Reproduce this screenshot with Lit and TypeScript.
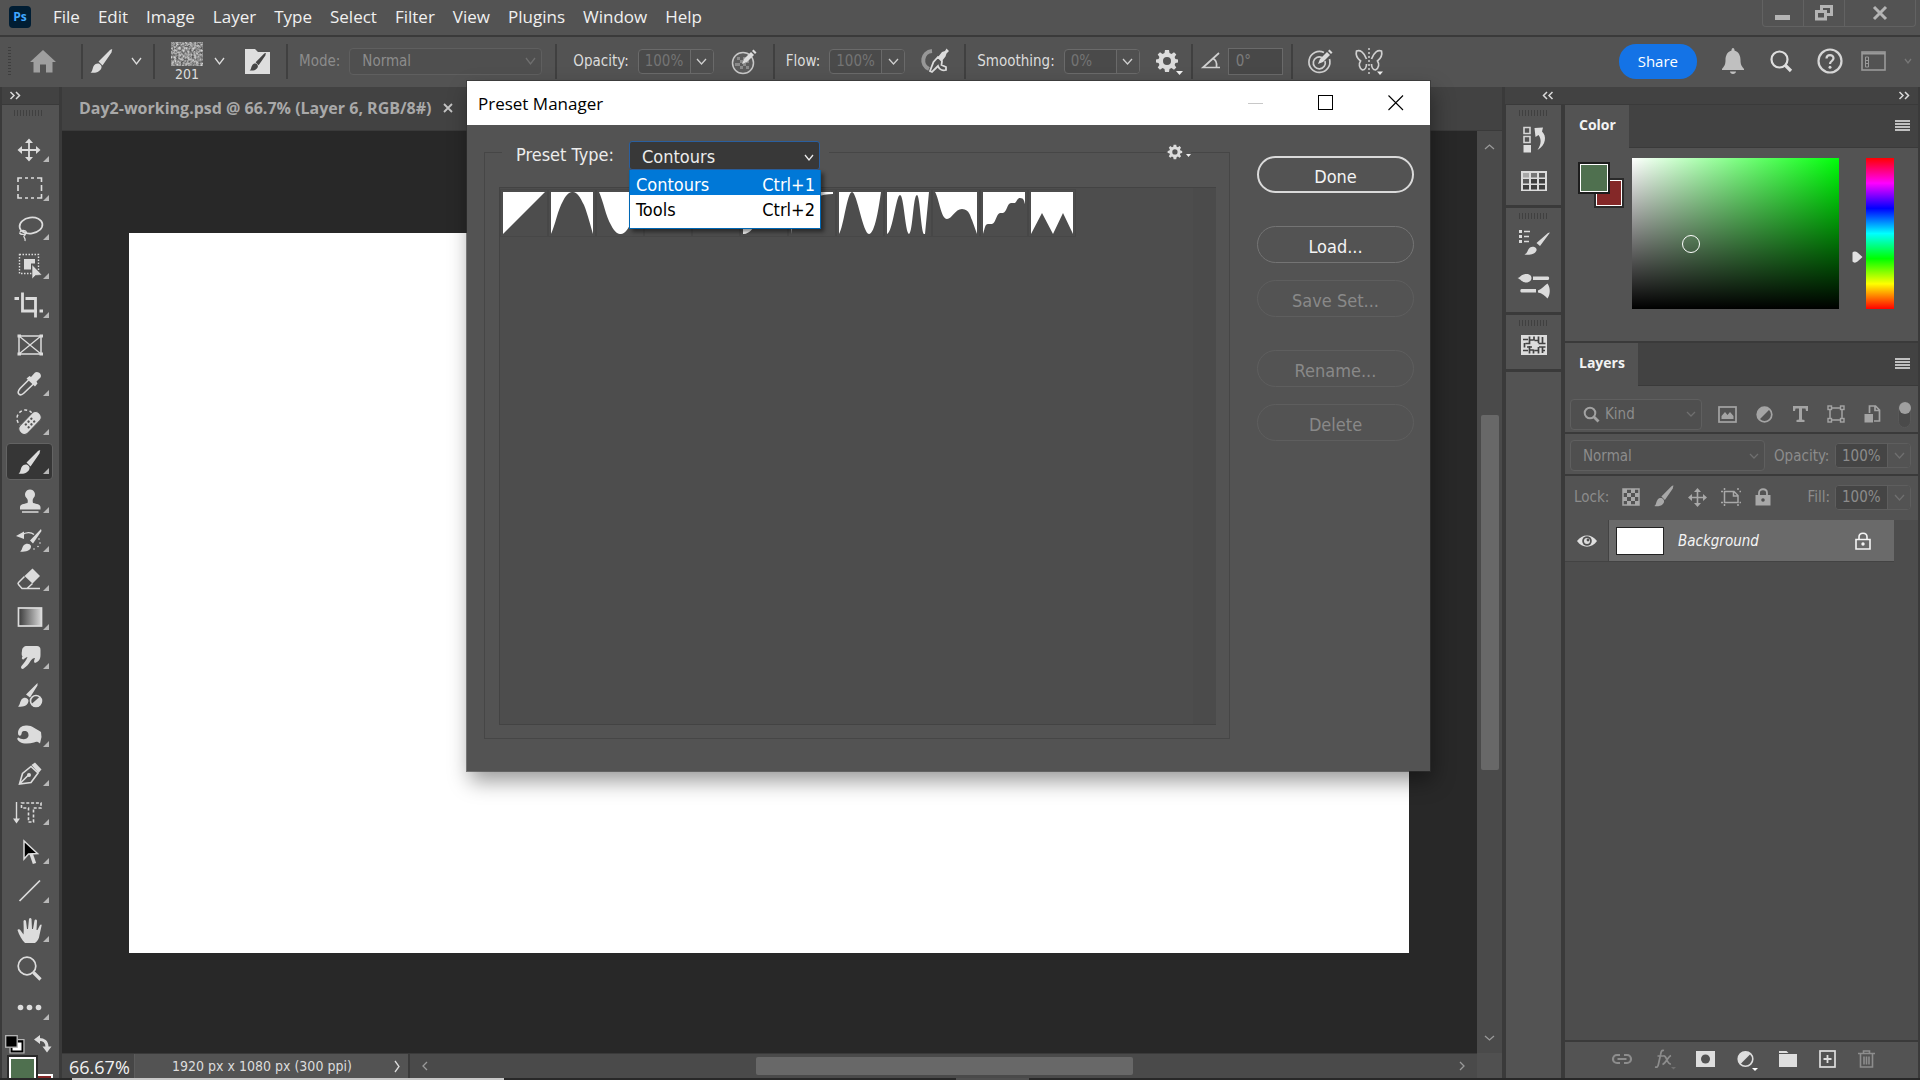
import { LitElement, html, css, svg, nothing } from "lit";
import { customElement, state } from "lit/decorators.js";
import { classMap } from "lit/directives/class-map.js";

const icon = (w: number, h: number, body: unknown) =>
  html`<svg class="icon" width=${w} height=${h} viewBox="0 0 ${w} ${h}" aria-hidden="true">${body}</svg>`;

const chevron = (dir: "down" | "up" | "left" | "right", w = 12, h = 8) => {
  const paths = {
    down: `M1 1L${w / 2} ${h - 1}L${w - 1} 1`,
    up: `M1 ${h - 1}L${w / 2} 1L${w - 1} ${h - 1}`,
    left: `M${w - 1} 1L1 ${h / 2}L${w - 1} ${h - 1}`,
    right: `M1 1L${w - 1} ${h / 2}L1 ${h - 1}`,
  };
  return icon(w, h, svg`<path d=${paths[dir]} fill="none" stroke="currentColor" stroke-width="1.3"/>`);
};

const doubleChevron = (left: boolean) =>
  icon(12, 9, svg`<path d=${left ? "M5 1L1.5 4.5L5 8M10.500 1L7 4.500L10.500 8" : "M1.5 1L5 4.500L1.500 8M7 1L10.500 4.500L7 8"} fill="none" stroke="#dadada" stroke-width="1.5"/>`);

const brushShape = svg`
  <path d="M27 6C28 5 26 5 25 6L13.500 17.500L17.500 21.500L26.500 8.500Z" fill="currentColor"/>
  <path d="M5.500 28.500C8 27 7 24.500 9 21.500C10.500 19 14.500 18.500 16.200 21.500C17.500 24.500 15 27 12 28.200C9.500 29 7 28.800 5.500 28.500Z" fill="currentColor"/>`;

const gearShape = svg`
  <path fill="currentColor" fill-rule="evenodd" d="M10 1H14L14.500 4L16.500 4.900L19 3.200L21.300 5.500L19.600 8L20.400 10L23 10.500V13.500L20.400 14L19.600 16L21.300 18.500L19 20.800L16.500 19.100L14.500 20L14 23H10L9.500 20L7.500 19.100L5 20.800L2.700 18.500L4.400 16L3.600 14L1 13.500V10.500L3.600 10L4.400 8L2.700 5.500L5 3.200L7.500 4.900L9.500 4ZM12 8A4 4 0 1 0 12 16A4 4 0 1 0 12 8Z"/>`;

const pencil = (x: number, y: number) => svg`
  <g transform="translate(${x} ${y})">
    <path d="M0 14L2 9L9 2L12 5L5 12Z" fill="#dcdcdc"/>
    <path d="M10 1L11.500 -0.500L14.500 2.500L13 4Z" fill="#dcdcdc"/>
  </g>`;

interface Tool { name: string; more: boolean; art: unknown; }

const stroke = (d: string, w = 1.6) => svg`<path d=${d} fill="none" stroke="currentColor" stroke-width=${w}/>`;
const fill = (d: string) => svg`<path d=${d} fill="currentColor"/>`;

const TOOLS: Tool[] = [
  { name: "Move", more: true, art: svg`${stroke("M16 8V26M7 17H25", 1.8)}${fill("M16 5.500L20 10H12ZM16 28.500L20 24H12ZM4.500 17L9 13V21ZM27.500 17L23 13V21Z")}` },
  { name: "Rectangular Marquee", more: true, art: stroke("M5 10V6H9M12 6H15M18 6H21M24 6H28.500V10M28.500 13V19M28.500 22V26H24M21 26H18M15 26H12M9 26H5V22M5 19V13") },
  { name: "Lasso", more: true, art: svg`<ellipse cx="18" cy="14.500" rx="11.500" ry="8" transform="rotate(-8 18 14.500)" fill="none" stroke="currentColor" stroke-width="1.7"/>${stroke("M7 21C8 18.500 13 19 13.500 21.500C13 24 7 24 6.500 21.500M9 20C14 22 12.500 24 11 25C10 26 13 27 12 30", 1.3)}` },
  { name: "Object Selection", more: true, art: svg`<rect x="6.500" y="4.500" width="19" height="19" fill="none" stroke="currentColor" stroke-width="1.4" stroke-dasharray="1.500 1.500"/>${fill("M11 9H22V13.500H18V19.500H11Z")}<path d="M19 14.500V29L22.500 25.500L29 25Z" fill="currentColor" stroke="#535353" stroke-width="0.600"/>` },
  { name: "Crop", more: true, art: svg`${stroke("M1.500 9.500H6M9.500 3.500V22H24M26.500 22H30M12.500 9.500H22.500V28.500", 2.8)}` },
  { name: "Frame", more: false, art: svg`<rect x="6" y="8" width="22" height="18" fill="none" stroke="currentColor" stroke-width="1.5"/>${stroke("M6 8L28 26M28 8L6 26", 1.3)}${fill("M4.500 6.500H8V9.500H4.500ZM26.500 6.500H30V9.500H26.500ZM4.500 24.500H8V27.500H4.500ZM26.500 24.500H30V27.500H26.500Z")}` },
  { name: "Eyedropper", more: true, art: svg`${stroke("M17 11.500L7 21.500C5.500 23.500 4.500 26 6 27.200C7.500 28.500 9.500 27.500 11 26L21.500 16", 1.6)}${fill("M13.500 11.500L16.500 9L18 10L22 5.500C25 3.500 29.500 7.500 27.500 10.500L23.500 14.500L24.500 16.500L22 19.500Z")}` },
  { name: "Spot Healing Brush", more: true, art: svg`<circle cx="12.500" cy="12.500" r="8.500" fill="none" stroke="currentColor" stroke-width="1.500" stroke-dasharray="3 2.500"/><g transform="rotate(-46 17 17)"><rect x="3.500" y="11.500" width="27" height="11" rx="5" fill="currentColor" stroke="#535353"/><g fill="#535353"><circle cx="13" cy="15" r="1.200"/><circle cx="17" cy="15" r="1.200"/><circle cx="21" cy="15" r="1.200"/><circle cx="13" cy="19" r="1.200"/><circle cx="17" cy="19" r="1.200"/><circle cx="21" cy="19" r="1.200"/></g></g>` },
  { name: "Brush", more: true, art: brushShape },
  { name: "Clone Stamp", more: true, art: fill("M17 5.500A5 5 0 0 1 20.500 14C19.500 15.500 19.500 17 20 19C24 20 27 20 27.500 23V25.500H7V23C7.500 20 10.500 20 14.500 19C15 17 15 15.500 13.500 14A5 5 0 0 1 17 5.500ZM9 27.200H25.500V28.800H9Z") },
  { name: "History Brush", more: true, art: svg`${fill("M28 6L17 17.500L20 20.500L28.500 8ZM7 28.500C9.500 27 8.500 25.500 10.500 22.500C12.500 20 17 20 18 23C18.500 26.500 14 29.500 7 28.500ZM3 13L11 8.500V16Z")}${stroke("M9 12C13 9 18 9 21 11.500", 1.3)}<g fill="currentColor"><circle cx="26" cy="16" r=".8"/><circle cx="27" cy="20" r=".8"/><circle cx="25" cy="23.500" r=".8"/><circle cx="21" cy="26" r=".8"/></g>` },
  { name: "Eraser", more: true, art: svg`${fill("M11.500 14L19.500 6.500L27 14L19.500 21.500Z")}${stroke("M11.500 14.500L5.500 20.500C5 21 5 22 5.500 22.500L9 26.500H14L19.500 21.500M9 26.500H27", 1.5)}` },
  { name: "Gradient", more: true, art: svg`<defs><linearGradient id="g"><stop offset="0" stop-color="#3a3a3a"/><stop offset="1" stop-color="#d8d8d8"/></linearGradient></defs><rect x="5.500" y="7" width="23" height="18" fill="url(#g)" stroke="currentColor" stroke-width="1.700"/>` },
  { name: "Smudge", more: true, art: fill("M9 11C9 8 11 6 14 6H24C26 6 27.500 7 27.500 10V15C27.500 20 25 22 22 23C20.500 22.500 21 20.500 22 18C20 18 19 19 17.500 21C16 24 13 27 10 29C8 29 7.500 27.500 8.500 26C11 23 13.500 20 14.500 17C13.500 17 12 18 10.500 19.500C8.500 19.500 8.500 18 9.500 16.500C8.500 15.500 8.500 13 9 11Z") },
  { name: "Adjustment Brush", more: false, art: svg`${fill("M24.500 4L13 15.500L17 18.500L24.500 6.500ZM5 27.500C7 26 6.500 24 8.500 20.500C10.500 18 14.500 18 15.500 21.500C15.500 25.500 11.500 28.500 5 27.500Z")}<circle cx="23" cy="22" r="5.500" fill="none" stroke="currentColor" stroke-width="1.600"/>${fill("M18.500 25L26.500 18C29.500 21 28.500 26 25 27.500C22 28 20 27 18.500 25Z")}` },
  { name: "Burn", more: true, art: svg`<path fill="currentColor" fill-rule="evenodd" d="M5 15C5 10 9 7 14 7.500C19 7.500 23 11 28 14L28.500 19L27 25.500C25 23.500 23 23.500 21 24.500C16 26 10 26 7 24C4 22 3.500 20 5.500 19.500C8 21.500 14 22.500 15.500 18C16 14 13 12 9.500 13.500C8 14.500 9.500 17 7.500 17.500C6 18 5 17 5 15Z"/><circle cx="11" cy="17" r="2.500" fill="#535353"/>` },
  { name: "Pen", more: true, art: svg`${stroke("M6.500 27L9.500 16.500L18 9.500L25 16L18 25.500ZM7 26.500L15 18.500", 1.6)}<circle cx="16" cy="18" r="2" fill="currentColor"/>${fill("M18.500 8L22 5.500L28.500 12.500L25.500 16Z")}` },
  { name: "Vertical Type Mask", more: true, art: svg`${stroke("M3.500 6V24", 1.4)}${fill("M0 22.500H7L3.500 27.500Z")}<path d="M8.500 7H28V12H20.500V26H15.500V12H8.500Z" fill="none" stroke="currentColor" stroke-width="1.600" stroke-dasharray="3 1.800"/>` },
  { name: "Path Selection", more: true, art: svg`<path d="M17.500 17L21.500 28.500" stroke="currentColor" stroke-width="3.500"/><path d="M11 6V24L15.500 19L24.500 18.500Z" fill="#000" stroke="currentColor" stroke-width="1.500"/>` },
  { name: "Line", more: true, art: stroke("M6.500 27L27 6.500", 1.7) },
  { name: "Hand", more: true, art: fill("M12 30C9 27 6 22 4.500 17C5 15.500 7 16 8 18L10.500 21.500C11 17 10.500 12 10.500 8C11 6.500 12.500 6.500 13 8L14 16H15L16 6C16.500 4.500 18 4.500 18.500 6L19 16H20L21.500 7.500C22 6 24 6.500 24 8L23.500 17H24.500L27 12C28 11 29 11.500 28.500 13L26.500 22C26 26 24.500 28 22 30Z") },
  { name: "Zoom", more: false, art: svg`<circle cx="14" cy="14" r="8.800" fill="none" stroke="currentColor" stroke-width="1.700"/>${stroke("M20.500 20.500L27.500 27.500", 3.2)}` },
  { name: "Edit Toolbar", more: true, art: svg`<g fill="currentColor"><circle cx="7.500" cy="16.500" r="2.800"/><circle cx="16.500" cy="16.500" r="2.800"/><circle cx="25.500" cy="16.500" r="2.800"/></g>` },
];

const MENUS = ["File", "Edit", "Image", "Layer", "Type", "Select", "Filter", "View", "Plugins", "Window", "Help"];

/* Each path is the area under one contour curve on a 42 by 42 tile. */
const CONTOURS: { name: string; d: string }[] = [
  { name: "Linear", d: "M0 42L42 0V42Z" },
  { name: "Cone", d: "M0 42C4 34 7 17 12 9C16 1 19 0 22 0C26 0 29 5 33 13C37 23 40 36 42 42Z" },
  { name: "Cone - Inverted", d: "M0 0C4 8 7 25 12 33C16 41 19 42 22 42C26 42 29 37 33 29C37 19 40 6 42 0V42H0Z" },
  { name: "Cove - Deep", d: "M0 0H42V42H0Z" },
  { name: "Cove - Shallow", d: "M0 30C14 28 30 18 42 0V42H0Z" },
  { name: "Gaussian", d: "M0 42C8 42 12 34 16 24C22 8 30 0 42 0V42Z" },
  { name: "Half Round", d: "M0 42C2 20 18 2 42 2V42Z" },
  { name: "Ring", d: "M0 42C5 34 8 0 13 0C18 0 24 42 30 42C36 42 40 14 42 0V42Z" },
  { name: "Ring - Double", d: "M0 42C6 40 9 3 13 3C17 3 18 40 22 42C26 40 26 3 30 3C33 3 34 41 37 42H38L42 0V42Z" },
  { name: "Rolling Slope - Descending", d: "M0 0C4 6 6 27 12 27C17 27 20 17 27 17C35 18 35 24 37 28L42 42H0Z" },
  { name: "Rounded Steps", d: "M0 42C2 36 2 32 5 32H9C13 31 13 22 17 21H20C24 20 24 11 28 11H32C34 10 34 6 37 6C41 6 41 9 42 12V42Z" },
  { name: "Sawtooth 1", d: "M0 42L11 21L22 42L32 21L42 42Z" },
];

@customElement("app-root")
export class AppRoot extends LitElement {
  @state() private activeTool = "Brush";
  @state() private presetType = "Contours";

  static styles = css`
    :host {
      display: block;
      --bar: #535353;
      --well: #424242;
      --line: #3a3a3a;
      --list: #4d4d4d;
      --text: #dcdcdc;
      --dim: #8c8c8c;
      font: 15px/20px "DejaVu Sans Condensed", "Noto Sans", sans-serif;
      color: var(--text);
    }
    * { box-sizing: border-box; }
    button, select, input { font: inherit; color: inherit; margin: 0; padding: 0; border: 0; background: none; appearance: none; outline: none; border-radius: 0; }
    button { display: inline-flex; align-items: center; justify-content: center; flex: none; }
    .icon { display: block; flex: none; overflow: visible; }
    .grow { flex: 1; }

    .app { position: relative; display: flex; flex-direction: column; height: 100vh; min-width: 1500px; overflow: hidden; background: var(--line); }

    .menubar { display: flex; align-items: flex-start; height: 37px; flex: none; background: var(--bar); border-bottom: 2px solid var(--line); padding-left: 9px; font: 17px/24px "Open Sans", "Noto Sans", sans-serif; color: #f0f0f0; }
    .logo { display: flex; align-items: center; justify-content: center; width: 22px; height: 22px; margin: 6px 22px 0 0; border-radius: 4px; background: #001d33; color: #40a8ff; font-size: 12px; font-weight: 700; }
    .menus { display: flex; gap: 18px; padding-top: 5px; }
    .winctl { display: flex; height: 27px; margin-right: 4px; border: 1px solid #626262; border-top: 0; border-radius: 0 0 4px 4px; color: #b4b4b4; }
    .winctl button { width: 41px; border-right: 1px solid #626262; }
    .winctl button:last-child { width: 70px; border-right: 0; }

    .options { display: flex; align-items: center; height: 50px; flex: none; background: var(--bar); padding: 0 8px 2px 6px; }
    .grip { width: 3px; height: 28px; margin-left: 2px; background: repeating-linear-gradient(#3e3e3e 0 1px, transparent 1px 3px); }
    .set { display: flex; align-items: center; height: 35px; flex: none; gap: 16px; padding: 0 15px 0 11px; border-right: 2px solid #404040; white-space: nowrap; }
    .set.start { gap: 19px; padding: 0 25px 0 0; }
    .set.tool-set { gap: 14px; padding: 0 10px 0 6px; }
    .set.brush-set { gap: 7px; padding: 0 15px 0 14px; }
    .set.mode-set { padding-right: 13px; }
    .set.opacity-set { padding-left: 16px; }
    .set.smooth-set { padding-right: 7px; }
    .set.angle-set { gap: 14px; padding: 0 8px; }
    .set.last { border-right: 0; gap: 20px; padding-left: 14px; }
    .set label { margin-right: -7px; }
    .off { color: var(--dim); }
    .home { color: #9f9f9f; width: 26px; }
    .tip { width: 26px; }
    .caret { width: 14px; }
    .brush-set .caret { margin-right: 10px; }
    .preset { flex-direction: column; width: 36px; font-size: 14px; line-height: 16px; }
    .field { position: relative; display: flex; align-items: center; }
    .field select { width: 100%; height: 27px; padding: 0 12px; border: 1px solid #5f5f5f; border-radius: 4px; background: #4f4f4f; color: var(--dim); opacity: 1; }
    .field .icon { position: absolute; right: 6px; pointer-events: none; color: #6f6f6f; }
    .mode { width: 193px; }
    .spin { display: flex; flex: none; width: 76px; height: 25px; border: 1px solid #6a6a6a; border-radius: 4px; background: #4a4a4a; overflow: hidden; }
    .spin input { flex: 1; min-width: 0; padding-left: 6px; color: #747474; opacity: 1; }
    .spin button { width: 23px; border-left: 1px solid #6a6a6a; background: #505050; color: #cfcfcf; }
    .angle { width: 55px; height: 27px; padding-left: 7px; border: 1px solid #6a6a6a; background: #484848; color: #7c7c7c; }
    .i28 { width: 28px; }
    .session { display: flex; align-items: center; gap: 22px; }
    .share { height: 35px; padding: 0 19px; margin-right: 2px; border-radius: 17px; background: #1473e6; color: #fff; font: 15px/20px "Open Sans", "Noto Sans", sans-serif; }
    .space { gap: 18px; margin-left: -4px; color: #787878; }

    .work { display: flex; flex: 1; min-height: 0; gap: 3px; }
    .head { display: flex; align-items: center; height: 17px; flex: none; background: var(--well); margin-bottom: 1px; }
    .grip10 { width: 29px; height: 6px; flex: none; background: repeating-linear-gradient(90deg, #404040 0 1px, transparent 1px 3px); }

    .tools { display: flex; flex-direction: column; width: 57px; margin-left: 2px; flex: none; }
    .tools .head { padding-left: 7px; }
    .toolbody { flex: 1; min-height: 0; overflow: hidden; display: flex; flex-direction: column; gap: 2px; background: var(--bar); padding: 5px 6px 0 4px; }
    .toolbody .grip10 { margin: 0 0 13px 8px; }
    .tool { position: relative; width: 47px; height: 37px; border-radius: 4px; border: 1px solid transparent; }
    .tool.on { background: #363636; border-color: #636363; }
    .tool.more::after { content: ""; position: absolute; right: 3px; bottom: 5px; border: 3px solid; border-color: transparent #b8b8b8 #b8b8b8 transparent; }
    .swaprow { display: flex; gap: 10px; padding-top: 5px; margin-left: -1px; height: 27px; flex: none; }

    .doc { display: flex; flex-direction: column; flex: 1; min-width: 0; }
    .tabs { display: flex; align-items: center; height: 44px; flex: none; background: var(--well); padding: 0 0 2px 17px; gap: 11px; font: 700 16px/20px "Open Sans", "Noto Sans", sans-serif; color: #a9a9a9; border-bottom: 1px solid var(--line); }
    .tabs h1 { font: inherit; margin: 0; }
    .stage { display: grid; grid-template-columns: 1fr 25px; grid-template-rows: 1fr 25px; flex: 1; min-height: 0; }
    .canvas { background: #282828; padding: 102px 68px 100px 67px; display: flex; }
    .paper { flex: 1; background: #fff; }
    .vbar { display: flex; flex-direction: column; align-items: center; background: #4a4a4a; color: #9a9a9a; padding: 13px 0 12px; }
    .vbar .thumb { width: 18px; flex: 354 0 0; background: #686868; border-radius: 2px; }
    .vtop { flex: 265 0 0; }
    .vend { flex: 265 0 0; }
    .bottom { display: flex; grid-column: 1; background: #4a4a4a; border-top: 1px solid var(--line); }
    .corner { background: #505050; }
    .zoom { width: 73px; height: 24px; padding: 2px 0 0 7px; background: #464646; border-right: 1px solid #5c5c5c; color: #f0f0f0; font: 18px/22px "Open Sans", "Noto Sans", sans-serif; }
    .info { display: flex; align-items: center; width: 275px; padding: 0 8px 0 37px; justify-content: space-between; background: var(--bar); border-right: 2px solid var(--line); white-space: nowrap; font-size: 14px; }
    .hbar { display: flex; align-items: center; flex: 1; padding: 0 12px; color: #9a9a9a; }
    .hbar .thumb { height: 18px; flex: 376 0 0; background: #686868; border-radius: 2px; }
    .hl { flex: 326 0 0; }
    .hr { flex: 324 0 0; }

    .right { display: flex; flex-direction: column; width: 415px; flex: none; padding-right: 2px; }
    .right .head { padding: 0 8px 0 37px; justify-content: space-between; }
    .rightbody { display: flex; flex: 1; min-height: 0; gap: 4px; }
    .dock { display: flex; flex-direction: column; width: 56px; flex: none; gap: 3px; padding-left: 1px; }
    .dockgroup { display: flex; flex-direction: column; align-items: center; gap: 18px; background: var(--bar); padding: 5px 0 14px; }
    .dockgroup .grip10 { margin-bottom: -9px; }
    .panels { display: flex; flex-direction: column; flex: 1; min-width: 0; gap: 2px; }
    .phead { display: flex; align-items: center; justify-content: space-between; height: 43px; background: var(--well); padding-right: 8px; border-bottom: 1px solid var(--line); flex: none; }
    .phead h2 { align-self: stretch; display: flex; align-items: center; margin: 0 0 -1px; padding: 0 13px 4px 14px; background: var(--bar); color: #f2f2f2; font: 700 14px/20px "Open Sans", "Noto Sans", sans-serif; }
    .burger { width: 15px; height: 12px; background: repeating-linear-gradient(#c0c0c0 0 2px, transparent 2px 3px); }
    .colorbody { display: flex; background: var(--bar); padding: 10px 24px 31px 13px; height: 193px; }
    .swatches { position: relative; width: 54px; flex: none; }
    .sw { position: absolute; width: 30px; height: 30px; border: 2px solid #fff; outline: 2px solid #2a2a2a; outline-offset: -1px; }
    .sw.bg { left: 17px; top: 21px; width: 28px; height: 28px; background: #842828; }
    .sw.fg { left: 1px; top: 5px; background: #4f704f; outline-color: #1d1d1d; }
    .field2d { position: relative; flex: 1; height: 151px; background: linear-gradient(to top, #000, transparent), linear-gradient(to right, #fff, #00ff0a); }
    .ring { position: absolute; left: 24%; top: 51%; width: 18px; height: 18px; border: 1px solid #fff; border-radius: 50%; }
    .huewrap { display: flex; width: 55px; flex: none; padding-left: 13px; }
    .huewrap .icon { margin: 93px 3px 0 0; }
    .hue { flex: 1; height: 151px; background: linear-gradient(#f00, #f0f, #00f, #0ff, #0f0, #ff0, #f00); }

    .layers { display: flex; flex-direction: column; flex: 1; min-height: 0; background: var(--list); }
    .lrow { display: flex; align-items: center; background: var(--bar); border-bottom: 2px solid var(--line); color: var(--dim); padding: 0 7px 0 5px; flex: none; }
    .lrow .field select { height: 31px; }
    .lrow.filter { height: 48px; padding-top: 10px; }
    .lrow.blend { height: 42px; padding-top: 3px; }
    .lrow.locks { height: 44px; border: 0; padding: 0 7px 2px 9px; gap: 5px; }
    .kind { width: 132px; margin-right: 16px; }
    .kind select { padding-left: 34px; }
    .kind .lens { left: 13px; right: auto; color: #a2a2a2; position: absolute; display: flex; }
    .kind .lens .icon { position: static; color: inherit; }
    .filters { display: flex; flex: 1; align-items: center; justify-content: space-between; color: #a4a4a4; padding-right: 17px; }
    .switch { width: 13px; height: 27px; border-radius: 7px; background: #4a4a4a; border: 1px solid #585858; align-items: flex-start; flex: none; }
    .switch::before { content: ""; width: 12px; height: 12px; border-radius: 50%; background: #a0a0a0; flex: none; }
    .blendmode { width: 195px; margin-right: 9px; }
    .lrow .spin { margin-left: auto; border-color: #5e5e5e; }
    .lrow .spin input { color: var(--dim); background: #454545; opacity: 1; }
    .lrow .spin button { color: #6f6f6f; border-color: #5e5e5e; background: var(--bar); }
    .lockset { display: flex; align-items: center; gap: 14px; margin-left: 8px; color: #a8a8a8; flex: 1; }
    .layer { display: flex; height: 42px; flex: none; border-bottom: 1px solid #434343; margin-right: 24px; }
    .eye { width: 44px; background: var(--bar); border-right: 1px solid #434343; }
    .layername { display: flex; align-items: center; flex: 1; gap: 14px; padding: 0 23px 0 7px; background: #6a6a6a; color: #f4f4f4; }
    .layername i { flex: 1; }
    .pic { width: 48px; height: 28px; background: #fff; border: 1px solid #222; }
    .lfoot { display: flex; align-items: center; justify-content: flex-end; height: 38px; flex: none; gap: 22px; padding: 0 43px 2px 0; background: var(--bar); border-top: 2px solid var(--line); color: #dedede; }
    .faint { color: #8d8d8d; }
    .edge { display: flex; height: 2px; flex: none; background: #282828; padding-left: 72px; }
    .edge span { background: #c8c8c8; flex: 0 0 432px; }
    .edge em { background: #505050; flex: 0 0 73px; margin-left: 452px; }

    /* The preset manager is a window floating over the workspace. */
    .dialog { position: absolute; left: 467px; top: 81px; width: 963px; height: 690px; display: flex; flex-direction: column; background: var(--bar); box-shadow: 0 0 0 1px rgba(50, 50, 50, 0.6), 3px 10px 20px rgba(0, 0, 0, 0.4); font-size: 18px; line-height: 24px; }
    .dtitle { display: flex; align-items: center; height: 44px; flex: none; background: #fff; color: #000; padding: 0 26px 0 11px; font: 17px/24px "Open Sans", "Noto Sans", sans-serif; }
    .dtitle h2 { font: inherit; margin: 0; padding-top: 2px; flex: 1; }
    .dctl { display: flex; gap: 54px; }
    .dbody { display: flex; flex: 1; padding: 27px 16px 32px 17px; gap: 27px; }
    .group { display: flex; flex-direction: column; flex: 1; border: 1px solid #464646; padding: 0 13px 13px 14px; }
    .ghead { display: flex; justify-content: space-between; height: 29px; margin: -12px 25px 17px 3px; }
    .typewrap { display: flex; align-items: center; background: var(--bar); padding: 0 9px 0 14px; color: #ececec; }
    .typewrap label { width: 113px; padding-bottom: 2px; }
    .combo { position: relative; }
    .combo select { display: block; width: 191px; height: 29px; padding: 2px 0 0 12px; border: 1px solid #2a5f9f; border-radius: 3px; background: #383838; color: #ececec; }
    .combo > .icon { position: absolute; right: 6px; top: 13px; pointer-events: none; }
    .popup { position: absolute; z-index: 2; left: 0; top: 29px; width: 192px; margin: 0; padding: 0 0 8px; list-style: none; background: #fff; color: #000; border: 1px solid #0067b4; border-top: 0; box-shadow: 3px 3px 4px rgba(0, 0, 0, 0.45); }
    .popup li { display: flex; justify-content: space-between; height: 25px; line-height: 30px; padding: 0 5px 0 6px; }
    .popup li.on { background: #0078d7; color: #fff; }
    .cog { width: 25px; background: var(--bar); padding: 0 0 7px; gap: 3px; }
    .list { flex: 1; display: flex; align-content: flex-start; align-items: flex-start; border: 1px solid #434343; background: linear-gradient(#4b4b4b, #4b4b4b) right / 23px 100% no-repeat, var(--list); padding: 1px 0 0; border-right: 0; }
    .tile { width: 48px; height: 48px; border: 1px solid #474747; padding: 1px; }
    .side { display: flex; flex-direction: column; width: 157px; flex: none; padding-top: 4px; }
    .pill { height: 37px; margin-bottom: 33px; border: 2px solid #dadada; border-radius: 19px; color: #f4f4f4; padding-top: 4px; }
    .pill.tight { margin-bottom: 17px; }
    .pill.plain { border: 1px solid #747474; }
    .pill:disabled { border: 1px solid #5e5e5e; color: #898989; }
  `;

  private spin(id: string, value: string) {
    return html`<span class="spin"><input id=${id} .value=${value} disabled /><button aria-label="Show slider">${chevron("down", 11, 7)}</button></span>`;
  }

  private menuBar() {
    return html`<header class="menubar">
      <span class="logo">Ps</span>
      <nav class="menus">${MENUS.map((m) => html`<button>${m}</button>`)}</nav>
      <span class="grow"></span>
      <div class="winctl">
        <button aria-label="Minimize">${icon(16, 16, svg`<path d="M0 10H15V15H0Z" fill="currentColor"/>`)}</button>
        <button aria-label="Restore">${icon(18, 16, svg`<path d="M6.500 5V1.500H16.500V9.500H12M1.500 6.500H10.500V14H1.500Z" fill="none" stroke="currentColor" stroke-width="3"/>`)}</button>
        <button aria-label="Close">${icon(16, 14, svg`<path d="M2 1L14 13M14 1L2 13" stroke="currentColor" stroke-width="3"/>`)}</button>
      </div>
    </header>`;
  }

  private optionsBar() {
    return html`<section class="options">
      <div class="set start">
        <span class="grip"></span>
        <button class="home" aria-label="Home">${icon(26, 24, svg`<path d="M13 1L26 13H22.500V23.500H16V15.500H10V23.500H3.500V13H0Z" fill="currentColor"/>`)}</button>
      </div>
      <div class="set tool-set">
        <button class="tip" aria-label="Tool preset">${icon(34, 34, brushShape)}</button>
        <button class="caret" aria-label="Tool presets">${chevron("down", 11, 8)}</button>
      </div>
      <div class="set brush-set">
        <button class="preset" aria-label="Brush preset, size 201">
          ${icon(34, 25, svg`<filter id="grain" x="0" y="0" width="100%" height="100%"><feTurbulence type="fractalNoise" baseFrequency="0.45" numOctaves="3" seed="4"/><feColorMatrix values="0 0 0 0 .66  0 0 0 0 .66  0 0 0 0 .66  1.700 0 0 0 -.35"/></filter><rect x="1" y="1" width="32" height="24" filter="url(#grain)"/>`)}
          <span>201</span>
        </button>
        <button class="caret" aria-label="Brush presets">${chevron("down", 11, 8)}</button>
        <button class="i28" aria-label="Brush settings">${icon(27, 26, svg`<path d="M1 1H11L14 4H26V26H1Z" fill="#dedede"/><g color="#454545" transform="translate(1.500 1) scale(.75)">${brushShape}</g>`)}</button>
      </div>
      <div class="set mode-set">
        <label class="off" for="mode">Mode:</label>
        <span class="field mode"><select id="mode" disabled><option>Normal</option></select>${chevron("down", 11, 8)}</span>
      </div>
      <div class="set opacity-set">
        <label for="opacity">Opacity:</label>
        ${this.spin("opacity", "100%")}
        <button class="i28" aria-label="Pressure for opacity">${icon(28, 28, svg`<circle cx="13" cy="16" r="10.500" fill="#5c5c5c" stroke="#c8c8c8" stroke-width="1.500"/><path d="M7 10h3v3h-3zM13 10h3v3h-3zM10 13h3v3h-3zM16 13h3v3h-3zM5 16h2v3h-2zM7 16h3v3h-3zM13 16h3v3h-3zM10 19h3v3h-3zM16 19h3v3h-3z" fill="#8a8a8a"/>${pencil(12, 3)}`)}</button>
      </div>
      <div class="set">
        <label for="flow">Flow:</label>
        ${this.spin("flow", "100%")}
        <button class="i28" aria-label="Airbrush">${icon(28, 28, svg`<path d="M11 4C1 5 -1 18 8 22" fill="none" stroke="#979797" stroke-width="4"/><path d="M9 24L12.500 15L17 10L21 14L20.500 18L25 20L25 23C21 24 18 22 17 19L11 25Z" fill="none" stroke="#dcdcdc" stroke-width="1.800"/><path d="M17 10L21 5L24 4L25.500 1.500L28 4L25.500 6.500L24.500 9.500L21 14Z" fill="#dcdcdc"/>`)}</button>
      </div>
      <div class="set smooth-set">
        <label for="smoothing">Smoothing:</label>
        ${this.spin("smoothing", "0%")}
        <button class="i28" aria-label="Smoothing options">${icon(28, 28, svg`<g transform="translate(-1 2)">${gearShape}</g><path d="M20 24H27L23.500 28Z" fill="#f0f0f0"/>`)}</button>
      </div>
      <div class="set angle-set">
        <label for="angle" aria-label="Brush angle">${icon(20, 18, svg`<path d="M18 1L2 15.500H19M12 6.500C15 8 16 11.500 15.500 15" fill="none" stroke="#d0d0d0" stroke-width="1.700"/>`)}</label>
        <input class="angle" id="angle" .value=${"0°"} disabled />
      </div>
      <div class="set last">
        <button class="i28" aria-label="Pressure for size">${icon(28, 28, svg`<path d="M17 5.500A10.500 10.500 0 1 0 22.500 12M15 10.500A6 6 0 1 0 18 14" fill="none" stroke="#cfcfcf" stroke-width="1.700"/>${pencil(11, 3)}`)}</button>
        <button class="i28" aria-label="Symmetry">${icon(28, 28, svg`<path d="M11.500 12C9 5 5 2.500 1.500 4C0.500 8 3 12 5.500 14C3.500 17 4 21 7.500 23C10 23 11.500 20 11.500 17M16.500 12C19 5 23 2.500 26.500 4C27.500 8 25 12 22.500 14C24.500 17 24 21 20.500 23C18 23 16.500 20 16.500 17" fill="none" stroke="#d0d0d0" stroke-width="1.700"/><path d="M14 1V27" stroke="#d0d0d0" stroke-width="1.500" stroke-dasharray="2 2"/><path d="M22 24.500H28L25 28Z" fill="#f0f0f0"/>`)}</button>
      </div>
      <span class="grow"></span>
      <div class="session">
        <button class="share">Share</button>
        <button aria-label="Notifications">${icon(24, 26, svg`<path d="M12 0C13 0 13.500 1 13.500 2.500C18 4 19.500 8 19.500 12C19.500 17 21 18.500 23 21V22H1V21C3 18.500 4.500 17 4.500 12C4.500 8 6 4 10.500 2.500C10.500 1 11 0 12 0ZM9 23.500H15C15 25 13.500 26 12 26C10.500 26 9 25 9 23.500Z" fill="#c0c0c0"/>`)}</button>
        <button class="i28" aria-label="Search">${icon(24, 24, svg`<circle cx="10.500" cy="10.500" r="8" fill="none" stroke="#dedede" stroke-width="2.200"/><path d="M16 16L22 22" stroke="#dedede" stroke-width="3.200"/>`)}</button>
        <button aria-label="Help">${icon(26, 26, svg`<circle cx="13" cy="13" r="11.500" fill="none" stroke="#d6d6d6" stroke-width="2.200"/><path d="M9.500 10.500C9.500 6 16.500 6 16.500 10.300C16.500 13 13 13 13 16" fill="none" stroke="#d6d6d6" stroke-width="2.200"/><circle cx="13" cy="19.300" r="1.500" fill="#d6d6d6"/>`)}</button>
        <button class="space" aria-label="Workspace">${icon(25, 20, svg`<rect x="1" y="1" width="23" height="18" fill="none" stroke="#9a9a9a" stroke-width="1.600"/><path d="M1 2.500H24" stroke="#9a9a9a" stroke-width="2"/><path d="M4.500 6H7.500V16H4.500Z" fill="none" stroke="#9a9a9a"/><path d="M4.500 9.500H7.500M4.500 12.500H7.500" stroke="#9a9a9a"/>`)}${chevron("down", 8, 6)}</button>
      </div>
    </section>`;
  }

  private toolPanel() {
    return html`<aside class="tools">
      <div class="head">${doubleChevron(false)}</div>
      <div class="toolbody">
        <span class="grip10"></span>
        ${TOOLS.map((t) => html`<button
          class=${classMap({ tool: true, more: t.more, on: t.name === this.activeTool })}
          aria-label=${t.name}
          @click=${() => (this.activeTool = t.name)}>${icon(34, 34, t.art)}</button>`)}
        <div class="swaprow">
          <button aria-label="Default colors">${icon(19, 18, svg`<path d="M6.500 6.500H17.500V16.500H6.500Z" fill="#fff" stroke="#000" stroke-width="2"/><path d="M5 12.500V18H19V4.500H13" fill="none" stroke="#b8b8b8" stroke-width="1.200"/><rect x="0.700" y="0.700" width="11.500" height="11.500" fill="#000" stroke="#b8b8b8" stroke-width="1.300"/>`)}</button>
          <button aria-label="Swap colors">${icon(18, 18, svg`<path d="M4 4.500C10 4 13 7 13 12" fill="none" stroke="#dcdcdc" stroke-width="3"/><path d="M0 4.500L6 0V9ZM8.500 11.500H17.500L13 17.500Z" fill="#dcdcdc"/>`)}</button>
        </div>
        ${icon(48, 44, svg`<rect x="14" y="18" width="32" height="26" fill="#842828" stroke="#fff" stroke-width="2"/><rect x="1" y="-2" width="31" height="32" fill="#2a2a2a"/><rect x="4" y="1" width="25" height="26" fill="#4f704f" stroke="#fff" stroke-width="2"/>`)}
      </div>
    </aside>`;
  }

  private documentArea() {
    return html`<main class="doc">
      <div class="tabs"><h1>Day2-working.psd @ 66.7% (Layer 6, RGB/8#)</h1>
        <button aria-label="Close document">${icon(10, 10, svg`<path d="M1 1L9 9M9 1L1 9" stroke="#c4c4c4" stroke-width="1.800"/>`)}</button></div>
      <div class="stage">
        <div class="canvas"><div class="paper"></div></div>
        <div class="vbar">${chevron("up", 11, 6)}<span class="vtop"></span><span class="thumb"></span><span class="vend"></span>${chevron("down", 11, 6)}</div>
        <div class="bottom">
          <input class="zoom" aria-label="Zoom" .value=${"66.67%"} />
          <div class="info"><span>1920 px x 1080 px (300 ppi)</span>${chevron("right", 6, 13)}</div>
          <div class="hbar">${chevron("left", 6, 10)}<span class="hl"></span><span class="thumb"></span><span class="hr"></span>${chevron("right", 6, 10)}</div>
        </div>
        <div class="corner"></div>
      </div>
    </main>`;
  }

  private iconDock() {
    return html`<div class="dock">
      <div class="dockgroup">
        <span class="grip10"></span>
        <button aria-label="History">${icon(26, 28, svg`<path d="M3 2.500H9V8.500H3ZM3 11.500H9V17.500H3Z" fill="none" stroke="#d6d6d6" stroke-width="1.600"/><path d="M2.500 20H10V27.500H2.500Z" fill="#dedede"/><path d="M13.500 3L22 2.500L21 6.500C26 11 25 20 16.500 25C20.500 19 20.500 14 17.500 10L14.500 12Z" fill="#dedede"/>`)}</button>
        <button aria-label="Swatches">${icon(26, 20, svg`<rect width="26" height="20" fill="#dcdcdc"/><path d="M2 2h6v4.500h-6z" fill="#a8a8a8"/><path d="M10 2h6v4.500h-6z" fill="#777"/><path d="M18 2h6v4.500h-6zM2 8h6v4.500h-6z" fill="#5a5a5a"/><path d="M10 8h6v4.500h-6zM18 8h6v4.500h-6zM2 14h6v4.500h-6zM10 14h6v4.500h-6zM18 14h6v4.500h-6z" fill="#3e3e3e"/>`)}</button>
      </div>
      <div class="dockgroup">
        <span class="grip10"></span>
        <button aria-label="Brushes">${icon(34, 28, svg`<path d="M2 2H5V5H2ZM2 7H5V10H2ZM2 12H5V15H2Z" fill="#dcdcdc"/><path d="M7 3.500H13M7 8.500H12M7 13.500H12" stroke="#dcdcdc" stroke-width="1.600"/><path d="M33 4.500L23 18L19.500 15L31 5ZM7.500 26.500C11 25 10 22 13 19.500C16 17.500 20.500 19.500 19.500 22.500C18 26.500 12 27.500 7.500 26.500Z" fill="#dcdcdc"/>`)}</button>
        <button aria-label="Brush settings">${icon(34, 24, svg`<path d="M0.500 4C3 4 4 0 9 0C13 0 14.500 2 14.500 4C14.500 6 13 8.500 9 8.500C5 8.500 3.500 5 0.500 4ZM16 2.500H31C32.500 2.500 32.500 6 31 6H16ZM4.500 15H19V18.500H4.500C3 18.500 3 15 4.500 15ZM21 16.500C25 15 28 11 30.500 9.500C33.500 14 33.500 20 30.500 24.500C28 22 25 19 21 18.500Z" fill="#dcdcdc"/>`)}</button>
      </div>
      <div class="dockgroup">
        <span class="grip10"></span>
        <button aria-label="Patterns">${icon(26, 20, svg`<rect width="26" height="20" fill="#dcdcdc"/><path d="M2 4.500H7M2 15.500H7M3.500 8V12.500M8.500 1.500V8.500H4.500M8.500 11V18.500M6 12H11M12.500 5H8.500M13 1.500V5.500M12.500 14.500V18.500M8.500 15H12.500M17.500 1.500V8M17.500 5.500H13.500M21.500 2V8.500H24.500M17.500 8.500H21.500M17.500 12V18.500M13.500 15.500H17.500M21.500 12V18M18 12H24.500M21.500 15.500H24" fill="none" stroke="#404040" stroke-width="1.700"/>`)}</button>
      </div>
      <div class="dockgroup grow"></div>
    </div>`;
  }

  private layersPanel() {
    return html`<section class="layers">
      <div class="phead"><h2>Layers</h2><button class="burger" aria-label="Layers menu"></button></div>
      <div class="lrow filter">
        <span class="field kind"><span class="lens">${icon(17, 17, svg`<circle cx="7" cy="7" r="5.300" fill="none" stroke="currentColor" stroke-width="2"/><path d="M10.500 10.500L15.500 15.500" stroke="currentColor" stroke-width="2.800"/>`)}</span>
          <select aria-label="Filter kind" disabled><option>Kind</option></select>${chevron("down", 10, 6)}</span>
        <div class="filters">
          <button aria-label="Pixel layers">${icon(19, 17, svg`<rect x="1" y="1" width="17" height="15" fill="none" stroke="currentColor" stroke-width="1.700"/><path d="M3.500 13V10L7 6L9.500 9L12 6L15.500 10V13Z" fill="currentColor"/>`)}</button>
          <button aria-label="Adjustment layers">${icon(17, 17, svg`<circle cx="8.500" cy="8.500" r="7.300" fill="none" stroke="currentColor" stroke-width="1.700"/><path d="M3.300 13.700L13.700 3.300A7.300 7.300 0 0 0 3.300 13.700Z" fill="currentColor"/>`)}</button>
          <button aria-label="Type layers">${icon(15, 16, svg`<path d="M0 0H15V5H13L12.500 2.500H9V13.500L11.500 14V16H3.500V14L6 13.500V2.500H2.500L2 5H0Z" fill="currentColor"/>`)}</button>
          <button aria-label="Shape layers">${icon(18, 18, svg`<rect x="3" y="3" width="12" height="12" fill="none" stroke="currentColor" stroke-width="1.500"/><g fill="#535353" stroke="currentColor" stroke-width="1.400"><rect x="1" y="1" width="3.500" height="3.500"/><rect x="13.500" y="1" width="3.500" height="3.500"/><rect x="1" y="13.500" width="3.500" height="3.500"/><rect x="13.500" y="13.500" width="3.500" height="3.500"/></g>`)}</button>
          <button aria-label="Smart objects">${icon(17, 18, svg`<path d="M5.500 8V1H11.500L15.500 5V16H10M11 1V5.500H15.500" fill="none" stroke="currentColor" stroke-width="1.700"/><path d="M0.500 9H9V17.500H0.500Z" fill="currentColor"/>`)}</button>
        </div>
        <button class="switch" aria-label="Toggle filtering"></button>
      </div>
      <div class="lrow blend">
        <span class="field blendmode"><select aria-label="Blend mode" disabled><option>Normal</option></select>${chevron("down", 10, 6)}</span>
        <label for="lopacity">Opacity:</label>${this.spin("lopacity", "100%")}
      </div>
      <div class="lrow locks">
        <span>Lock:</span>
        <div class="lockset">
          <button aria-label="Lock transparent pixels">${icon(18, 18, svg`<rect x="1" y="1" width="16" height="16" fill="none" stroke="currentColor" stroke-width="1.500"/><path d="M1 1h4v4h-4zM9 1h4v4h-4zM5 5h4v4h-4zM13 5h4v4h-4zM1 9h4v4h-4zM9 9h4v4h-4zM5 13h4v4h-4zM13 13h4v4h-4z" fill="currentColor"/>`)}</button>
          <button aria-label="Lock image pixels">${icon(20, 22, svg`<g transform="translate(-4.500 -5) scale(.88)">${brushShape}</g>`)}</button>
          <button aria-label="Lock position">${icon(19, 19, svg`<path d="M9.500 3V16M3 9.500H16" stroke="currentColor" stroke-width="1.600"/><path d="M9.500 0L13 4H6ZM9.500 19L13 15H6ZM0 9.500L4 6V13ZM19 9.500L15 6V13Z" fill="currentColor"/>`)}</button>
          <button aria-label="Lock artboard nesting">${icon(20, 18, svg`<path d="M3.500 3.500H13L17 7.500V14.500H3.500ZM12.500 3.500V8H17" fill="none" stroke="currentColor" stroke-width="1.500"/><path d="M3.500 0V2M0 3.500H2M17 0V2M18.500 3.500H20M3.500 16V18M0 14.500H2M17 16V18M18.500 14.500H20" stroke="currentColor" stroke-width="1.500"/>`)}</button>
          <button aria-label="Lock all">${icon(16, 18, svg`<path d="M0.500 7H15.500V17.500H0.500Z" fill="currentColor"/><path d="M4 8V5C4 0 12 0 12 5V8" fill="none" stroke="currentColor" stroke-width="1.800"/><circle cx="8" cy="12" r="1.800" fill="#505050"/>`)}</button>
        </div>
        <label for="lfill">Fill:</label>${this.spin("lfill", "100%")}
      </div>
      <div class="layer">
        <button class="eye" aria-label="Layer visibility">${icon(20, 14, svg`<path d="M0 7C5 -0.500 15 -0.500 20 7C15 14.500 5 14.500 0 7Z" fill="#e0e0e0"/><circle cx="10" cy="7" r="4.800" fill="#505050"/><circle cx="10" cy="7" r="3" fill="#dcdcdc"/><circle cx="11" cy="6" r="1.400" fill="#505050"/>`)}</button>
        <div class="layername"><span class="pic"></span><i>Background</i>${icon(16, 18, svg`<path d="M1 7.500H15V17H1Z" fill="none" stroke="currentColor" stroke-width="1.600"/><path d="M4 7V5C4 0 12 0 12 5V7" fill="none" stroke="currentColor" stroke-width="1.600"/><circle cx="8" cy="12" r="1.700" fill="currentColor"/>`)}</div>
      </div>
      <span class="grow"></span>
      <footer class="lfoot">
        <button class="faint" aria-label="Link layers">${icon(22, 12, svg`<path d="M9 2H6A4 4 0 0 0 6 10H9M13 2H16A4 4 0 0 1 16 10H13M6.500 6H15.500" fill="none" stroke="currentColor" stroke-width="2.200"/>`)}</button>
        <button class="faint" aria-label="Layer style">${icon(19, 20, svg`<path d="M9 1.500C6.500 0.500 6 3 5.500 6L3.500 15C3 18 2 18.500 0 18M2.500 7H8.500M8.500 7C12 6 11.500 15.500 16 15M16 6.500C13 7.500 11 14 7.500 15.500" fill="none" stroke="currentColor" stroke-width="1.700"/><path d="M16 18H21L18.500 20.500Z" fill="#707070"/>`)}</button>
        <button aria-label="Add mask">${icon(19, 16, svg`<rect width="19" height="16" fill="currentColor"/><circle cx="9.500" cy="8" r="4.500" fill="#535353"/>`)}</button>
        <button aria-label="New adjustment layer">${icon(20, 18, svg`<circle cx="8.500" cy="9" r="7.300" fill="none" stroke="currentColor" stroke-width="1.600"/><path d="M3.300 14.200L13.700 3.800A7.300 7.300 0 0 0 3.300 14.200Z" fill="currentColor"/><path d="M15 18H21L18 21Z" fill="#fff"/>`)}</button>
        <button aria-label="New group">${icon(18, 16, svg`<path d="M0 0H7.500L9.500 2H0ZM0 3H18V16H0Z" fill="currentColor"/>`)}</button>
        <button aria-label="New layer">${icon(17, 18, svg`<rect x="1" y="1" width="15" height="16" fill="none" stroke="currentColor" stroke-width="1.700"/><path d="M8.500 5V13M4.500 9H12.500" stroke="currentColor" stroke-width="1.800"/>`)}</button>
        <button class="faint" aria-label="Delete layer">${icon(17, 18, svg`<path d="M0 3.500H17M5.500 3V1H11.500V3M2.500 4V17H14.500V4M6 6.500V14.500M8.500 6.500V14.500M11 6.500V14.500" fill="none" stroke="currentColor" stroke-width="1.600"/>`)}</button>
      </footer>
    </section>`;
  }

  private rightSide() {
    return html`<aside class="right">
      <div class="head">${doubleChevron(true)}${doubleChevron(false)}</div>
      <div class="rightbody">
        ${this.iconDock()}
        <div class="panels">
          <section>
            <div class="phead"><h2>Color</h2><button class="burger" aria-label="Color menu"></button></div>
            <div class="colorbody">
              <div class="swatches"><button class="sw bg" aria-label="Background color"></button><button class="sw fg" aria-label="Foreground color"></button></div>
              <div class="field2d"><span class="ring"></span></div>
              <div class="huewrap">${icon(11, 12, svg`<path d="M0.500 1.500C1.500 0 4 0 5.500 1.500L10.500 6L5.500 10.500C4 12 1.500 12 0.500 10.500Z" fill="#e2e2e2"/>`)}<div class="hue"></div></div>
            </div>
          </section>
          ${this.layersPanel()}
        </div>
      </div>
    </aside>`;
  }

  private presetDialog() {
    const rows = [["Contours", "Ctrl+1"], ["Tools", "Ctrl+2"]];
    return html`<section class="dialog" role="dialog" aria-labelledby="dt">
      <header class="dtitle"><h2 id="dt">Preset Manager</h2>
        <div class="dctl">
          <button aria-label="Minimize">${icon(16, 16, svg`<path d="M0 8.500H15" stroke="#c8c8c8"/>`)}</button>
          <button aria-label="Maximize">${icon(16, 16, svg`<rect x="0.500" y="0.500" width="14" height="14" fill="none" stroke="#000"/>`)}</button>
          <button aria-label="Close">${icon(16, 16, svg`<path d="M0.500 0.500L15 15M15 0.500L0.500 15" stroke="#000" stroke-width="1.100"/>`)}</button>
        </div>
      </header>
      <div class="dbody">
        <div class="group">
          <div class="ghead">
            <div class="typewrap"><label for="ptype">Preset Type:</label>
              <span class="combo"><select id="ptype"><option>Contours</option><option>Tools</option></select>${chevron("down", 10, 7)}
                <ul class="popup" role="listbox">${rows.map(([n, k]) => html`<li role="option" class=${n === this.presetType ? "on" : nothing}
                  @click=${() => (this.presetType = n)}><span>${n}</span><span>${k}</span></li>`)}</ul>
              </span></div>
            <button class="cog" aria-label="Preset options">${icon(16, 16, svg`<g transform="scale(.66)">${gearShape}</g>`)}${icon(5, 3, svg`<path d="M0 3H5L2.500 6Z" fill="#f0f0f0"/>`)}</button>
          </div>
          <div class="list">${CONTOURS.map((c) => html`<button class="tile" aria-label=${c.name}>${icon(42, 42, svg`<rect width="42" height="42" fill="#fff"/><path d=${c.d} fill="#4d4d4d"/>`)}</button>`)}</div>
        </div>
        <div class="side">
          <button class="pill">Done</button>
          <button class="pill plain tight">Load...</button>
          <button class="pill" disabled>Save Set...</button>
          <button class="pill tight" disabled>Rename...</button>
          <button class="pill" disabled>Delete</button>
        </div>
      </div>
    </section>`;
  }

  render() {
    return html`<div class="app">
      ${this.menuBar()}${this.optionsBar()}
      <div class="work">${this.toolPanel()}${this.documentArea()}${this.rightSide()}</div>
      <div class="edge"><span></span><em></em></div>
      ${this.presetDialog()}
    </div>`;
  }
}
